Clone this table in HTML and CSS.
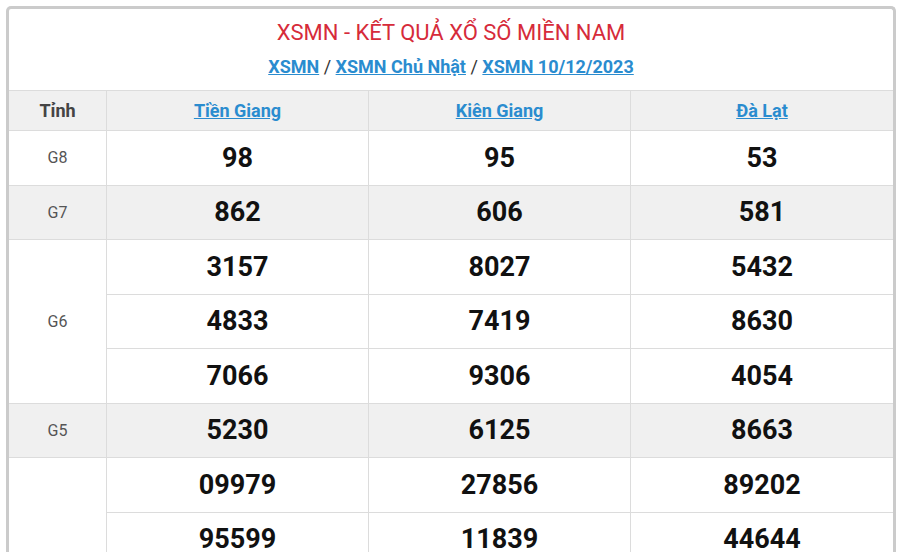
FILE: index.html
```html
<!DOCTYPE html>
<html lang="vi">
<head>
<meta charset="utf-8">
<title>XSMN - Kết quả xổ số miền Nam</title>
<link rel="stylesheet" href="styles.css">
</head>
<body>
<div class="card">
  <div class="head">
    <h2 class="title">XSMN - KẾT QUẢ XỔ SỐ MIỀN NAM</h2>
    <div class="crumbs">
      <a href="#">XSMN</a> <span class="sep">/</span> <a href="#">XSMN Chủ Nhật</a> <span class="sep">/</span> <a href="#">XSMN 10/12/2023</a>
    </div>
  </div>
  <div class="results">
    <div class="cell hd lbl-h">Tỉnh</div>
    <div class="cell hd"><a href="#">Tiền Giang</a></div>
    <div class="cell hd"><a href="#">Kiên Giang</a></div>
    <div class="cell hd last"><a href="#">Đà Lạt</a></div>

    <div class="cell lbl">G8</div>
    <div class="cell num">98</div>
    <div class="cell num">95</div>
    <div class="cell num last">53</div>

    <div class="cell lbl alt">G7</div>
    <div class="cell num alt">862</div>
    <div class="cell num alt">606</div>
    <div class="cell num alt last">581</div>

    <div class="cell lbl span3">G6</div>
    <div class="cell num">3157</div>
    <div class="cell num">8027</div>
    <div class="cell num last">5432</div>
    <div class="cell num">4833</div>
    <div class="cell num">7419</div>
    <div class="cell num last">8630</div>
    <div class="cell num">7066</div>
    <div class="cell num">9306</div>
    <div class="cell num last">4054</div>

    <div class="cell lbl alt">G5</div>
    <div class="cell num alt">5230</div>
    <div class="cell num alt">6125</div>
    <div class="cell num alt last">8663</div>

    <div class="cell lbl span7">G4</div>
    <div class="cell num">09979</div>
    <div class="cell num">27856</div>
    <div class="cell num last">89202</div>
    <div class="cell num">95599</div>
    <div class="cell num">11839</div>
    <div class="cell num last">44644</div>
  </div>
</div>
</body>
</html>
```
FILE: styles.css
```css
html, body {
  margin: 0;
  padding: 0;
  background: #fff;
}
body {
  font-family: Roboto, "Liberation Sans", Arial, sans-serif;
  color: #222;
}
.card {
  margin: 6px 0 0 6px;
  width: 884px;
  height: 543px;
  border: 3px solid #cbcbcb;
  border-bottom: 0;
  border-radius: 5px 5px 0 0;
  overflow: hidden;
  background: #fff;
}
.head {
  padding: 10px 0 11px;
  text-align: center;
  border-bottom: 1px solid #dcdcdc;
}
.title {
  margin: 0;
  font-size: 22px;
  line-height: 28px;
  font-weight: 400;
  color: #d62b3a;
}
.crumbs {
  margin-top: 8px;
  font-size: 18px;
  line-height: 24px;
  font-weight: 700;
  color: #444;
}
.crumbs a {
  color: #2a8ccf;
  text-decoration: underline;
}
.crumbs .sep {
  font-weight: 400;
  color: #333;
}
.results {
  display: grid;
  grid-template-columns: 98px repeat(3, 1fr);
  grid-template-rows: 40px;
  grid-auto-rows: 54.5px;
}
.cell {
  box-sizing: border-box;
  display: flex;
  align-items: center;
  justify-content: center;
  border-right: 1px solid #dcdcdc;
  border-bottom: 1px solid #dcdcdc;
}
.cell.last {
  border-right: 0;
}
.hd {
  background: #f0f0f0;
  font-size: 18px;
  font-weight: 700;
}
.hd a {
  color: #2a8ccf;
  text-decoration: underline;
}
.lbl-h {
  color: #444;
}
.alt {
  background: #f0f0f0;
}
.lbl {
  font-size: 16px;
  color: #555;
}
.span3 {
  grid-row: span 3;
}
.span7 {
  grid-row: span 7;
}
.num {
  font-size: 27px;
  font-weight: 700;
  color: #111;
}
```
